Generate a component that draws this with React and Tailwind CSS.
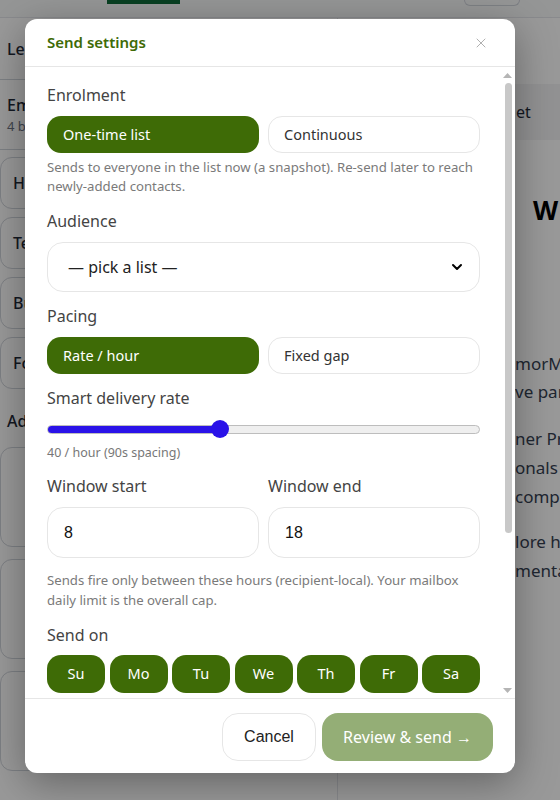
import { X, ChevronDown } from "lucide-react";

const days = ["Su", "Mo", "Tu", "We", "Th", "Fr", "Sa"];

const Backdrop = () => (
  <div className="flex flex-col h-[800px] w-[560px] bg-white text-[#1f2937]">
    {/* top tabs */}
    <div className="flex h-[18px] border-b border-gray-200 bg-gray-50">
      <div className="w-[107px]" />
      <div className="w-[73px] border-t-4 border-[#0f6b3a]" />
      <div className="flex-1" />
      <div className="w-[56px] mr-[40px] h-[6px] rounded-b-[6px] border border-t-0 border-gray-300" />
    </div>
    <div className="flex flex-1">
      {/* left list */}
      <div className="w-[338px] shrink-0 border-r border-gray-200 flex flex-col">
        <div className="px-[7px] h-[62px] flex items-center border-b border-gray-300 text-[16px] font-medium">Lelia onboarding</div>
        <div className="px-[7px] h-[70px] flex flex-col justify-center border-b border-gray-300">
          <div className="text-[16px] font-medium">Email sequence</div>
          <div className="text-[13px] text-gray-500">4 blocks</div>
        </div>
        <div className="flex flex-col gap-[8px] pt-[7px] pb-[10px]">
          {["Header", "Text", "Button", "Footer"].map((t) => (
            <div key={t} className="h-[52px] rounded-[12px] border border-gray-300 flex items-center px-[12px] text-[16px] font-medium">{t}</div>
          ))}
        </div>
        <div className="px-[7px] pt-[10px] text-[16px] font-medium">Add block</div>
        <div className="grid grid-cols-2 gap-[12px] pt-[14px] pr-[10px]">
          {[0, 1, 2, 3, 4, 5].map((i) => (
            <div key={i} className="h-[100px] rounded-[12px] border border-gray-300" />
          ))}
        </div>
      </div>
      {/* right preview */}
      <div className="flex-1 min-w-0 flex flex-col whitespace-nowrap overflow-hidden">
        <div className="h-[56px] mt-[66px] ml-[10px] rounded-l-[10px] bg-gray-100 flex items-center pl-[168px] text-[16px]">et</div>
        <div className="pl-[195px] pt-[53px] text-[26px] font-bold text-black leading-[34px]">W</div>
        <div className="pl-[177px] pt-[123px] text-[17px] leading-[28px] text-gray-700">
          <div>morMail</div>
          <div>ve partners</div>
        </div>
        <div className="pl-[177px] pt-[18px] text-[17px] leading-[29px] text-gray-700">
          <div>ner Pro</div>
          <div>onals with</div>
          <div>compete</div>
        </div>
        <div className="pl-[177px] pt-[16px] text-[17px] leading-[29px] text-gray-700">
          <div>lore how</div>
          <div>mentals</div>
        </div>
      </div>
    </div>
  </div>
);

const Label = ({ children, className = "" }) => (
  <div className={"text-[16px] leading-[24px] text-[#444] " + className}>{children}</div>
);

const Toggle = ({ left, right }) => (
  <div className="grid grid-cols-2 gap-[9px] mt-[9px]">
    <button className="h-[37px] rounded-[14px] bg-[#3e6b06] text-white text-[14.5px] text-left pl-[16px]">{left}</button>
    <button className="h-[37px] rounded-[14px] border border-[#e6e6e6] bg-white text-[#333] text-[14.5px] text-left pl-[15px]">{right}</button>
  </div>
);

const Help = ({ children, className = "" }) => (
  <div className={"text-[13.2px] leading-[19px] text-[#7a7a7a] " + className}>{children}</div>
);

const Arrow = ({ down }) => (
  <div className="h-[14px] flex items-center justify-center">
    <svg width="9" height="5" viewBox="0 0 9 5" className={down ? "rotate-180" : ""}>
      <path d="M4.5 0 L9 5 L0 5 Z" fill="#b5b5b5" />
    </svg>
  </div>
);

export default function App() {
  return (
    <div className="relative w-[560px] h-[800px] overflow-hidden" style={{ fontFamily: '"Noto Sans", "Open Sans", sans-serif' }}>
      <Backdrop />
      <div className="absolute inset-0 bg-black/40" />
      {/* modal */}
      <div className="absolute left-[25px] top-[19px] w-[490px] h-[754px] bg-white rounded-[12px] shadow-[0_10px_40px_rgba(0,0,0,0.35)] flex flex-col overflow-hidden">
        <div className="h-[48px] shrink-0 flex items-center justify-between pl-[22px] pr-[26px] border-b border-[#e6e6e6]">
          <div className="text-[15px] font-semibold text-[#3e6b06]">Send settings</div>
          <X className="w-[16px] h-[16px] text-[#b0b0b0]" strokeWidth={1.5} />
        </div>
        <div className="flex-1 min-h-0 flex">
          <div className="flex-1 min-w-0 overflow-hidden pl-[22px] pr-[20px] pt-[16px] pb-[20px]">
            <Label>Enrolment</Label>
            <Toggle left="One-time list" right="Continuous" />
            <Help className="mt-[5px]">Sends to everyone in the list now (a snapshot). Re-send later to reach newly-added contacts.</Help>

            <Label className="mt-[13px]">Audience</Label>
            <div className="mt-[9px] h-[50px] rounded-[16px] border border-[#e6e6e6] flex items-center justify-between pl-[20px] pr-[14px]">
              <span className="text-[16px] text-[#222]">— pick a list —</span>
              <ChevronDown className="w-[16px] h-[16px] text-black" strokeWidth={3} />
            </div>

            <Label className="mt-[12px]">Pacing</Label>
            <Toggle left="Rate / hour" right="Fixed gap" />

            <Label className="mt-[12px]">Smart delivery rate</Label>
            <div className="relative mt-[8px] h-[22px] flex items-center">
              <div className="w-full h-[9px] rounded-full border border-[#bdbdbd] bg-[#efefef] overflow-hidden">
                <div className="h-full w-[40%] bg-[#2a12e8]" />
              </div>
              <div className="absolute left-[40%] -ml-[9px] w-[18px] h-[18px] rounded-full bg-[#2a12e8]" />
            </div>
            <div className="mt-[4px] text-[12.5px] leading-[18px] text-[#777]">40 / hour (90s spacing)</div>

            <div className="grid grid-cols-2 gap-[9px] mt-[12px]">
              <div>
                <Label>Window start</Label>
                <div className="mt-[9px] h-[51px] rounded-[16px] border border-[#e6e6e6] flex items-center pl-[16px] text-[16px] text-[#111]" style={{ fontFamily: '"Liberation Sans", Arial, sans-serif' }}>8</div>
              </div>
              <div>
                <Label>Window end</Label>
                <div className="mt-[9px] h-[51px] rounded-[16px] border border-[#e6e6e6] flex items-center pl-[16px] text-[16px] text-[#111]" style={{ fontFamily: '"Liberation Sans", Arial, sans-serif' }}>18</div>
              </div>
            </div>
            <Help className="mt-[12px] leading-[20px]">Sends fire only between these hours (recipient-local). Your mailbox daily limit is the overall cap.</Help>

            <Label className="mt-[13px]">Send on</Label>
            <div className="grid grid-cols-7 gap-[4.5px] mt-[8px]">
              {days.map((d) => (
                <button key={d} className="h-[38px] rounded-[14px] bg-[#3e6b06] text-white text-[14.5px]">{d}</button>
              ))}
            </div>

            <Label className="mt-[14px]">Subject line</Label>
            <div className="mt-[9px] h-[50px] rounded-[16px] border border-[#e6e6e6]" />
            <Label className="mt-[12px]">Reply-to</Label>
            <div className="mt-[9px] h-[50px] rounded-[16px] border border-[#e6e6e6]" />
          </div>
          {/* scrollbar */}
          <div className="w-[15px] shrink-0 flex flex-col pt-[1px] pb-[1px]">
            <Arrow />
            <div className="flex-1 pl-[5px] pt-[1px]">
              <div className="w-[7px] h-[450px] rounded-full bg-[#c8c8c8]" />
            </div>
            <Arrow down />
          </div>
        </div>
        <div className="h-[75px] shrink-0 border-t border-[#e6e6e6] flex items-center justify-end gap-[6px] pr-[22px] pt-[1px]">
          <button className="h-[48px] w-[94px] rounded-[16px] border border-[#e6e6e6] bg-white text-[16px] text-[#222]" style={{ fontFamily: '"Liberation Sans", Arial, sans-serif' }}>Cancel</button>
          <button className="h-[48px] w-[171px] rounded-[16px] bg-[#94ae76] text-white text-[16px]">Review &amp; send →</button>
        </div>
      </div>
    </div>
  );
}
